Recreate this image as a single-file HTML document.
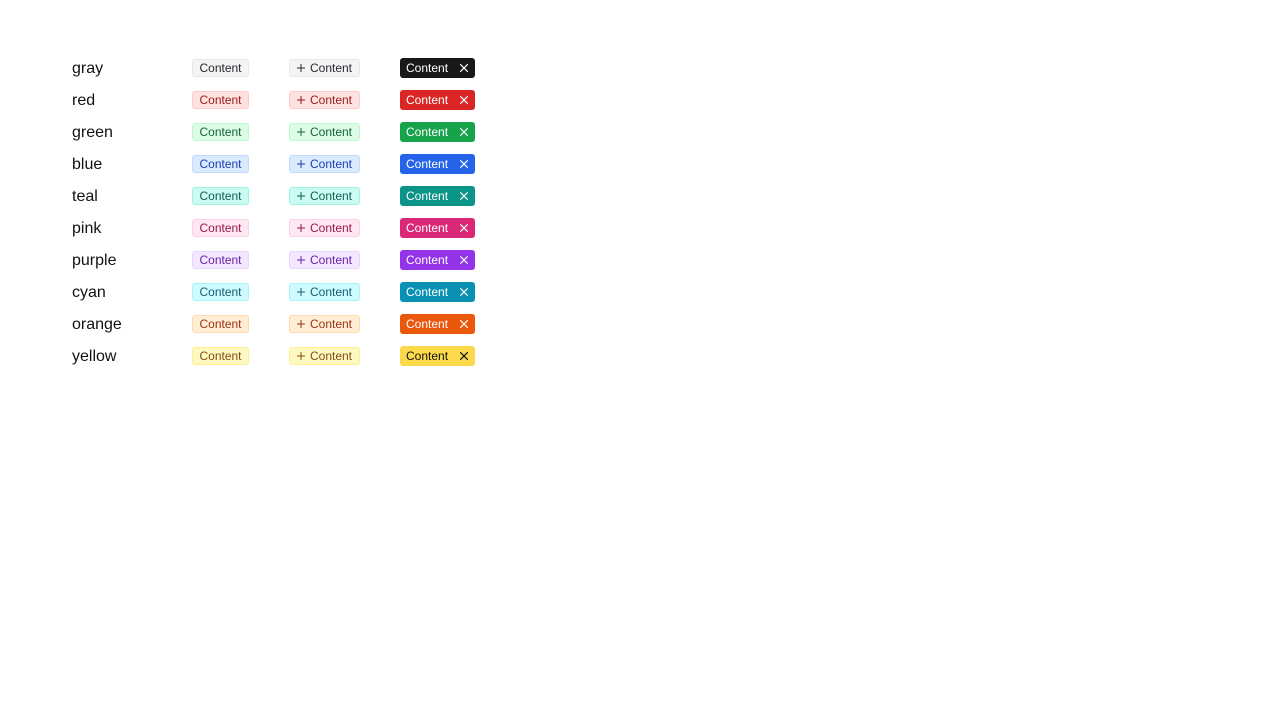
<!DOCTYPE html>
<html><head><style>
body{margin:0;width:1280px;height:720px;background:#fff;font-family:"Liberation Sans",sans-serif;position:relative}
.row{position:absolute;left:0;height:32px;width:600px}
.lab{position:absolute;left:72px;top:1px;line-height:32px;font-size:16px;color:#111}
.t{position:absolute;box-sizing:border-box;font-size:12px;border:1px solid;border-radius:3px;display:flex;align-items:center;justify-content:center}
.a{left:192px;top:7px;width:57px;height:18px}
.b{left:289px;top:7px;width:71px;height:18px}
.c{left:400px;top:6px;width:75px;height:20px;border:none;border-radius:3px;justify-content:flex-start;padding-left:6px}
.c svg{position:absolute;left:60px;top:6px}
.b svg{margin-right:5px}
</style></head><body>
<div id="r"></div>
<script>
const d=[["gray","#f3f4f6","#e5e7eb","#27272a","#18181b","#fff"],
["red","#fee2e2","#fecaca","#991b1b","#dc2626","#fff"],
["green","#dcfce7","#bbf7d0","#166534","#16a34a","#fff"],
["blue","#dbeafe","#bfdbfe","#1e40af","#2563eb","#fff"],
["teal","#ccfbf1","#99f6e4","#115e59","#0d9488","#fff"],
["pink","#fce7f3","#fbcfe8","#9d174d","#db2777","#fff"],
["purple","#f3e8ff","#e9d5ff","#6b21a8","#9333ea","#fff"],
["cyan","#cffafe","#a5f3fc","#155e75","#0891b2","#fff"],
["orange","#ffedd5","#fed7aa","#9a3412","#ea580c","#fff"],
["yellow","#fef9c3","#fef08a","#854d0e","#fcd94a","#111"]];
let h="";
d.forEach((c,i)=>{
h+=`<div class="row" style="top:${52+i*32}px"><div class="lab">${c[0]}</div>
<div class="t a" style="background:${c[1]};border-color:${c[2]};color:${c[3]}">Content</div>
<div class="t b" style="background:${c[1]};border-color:${c[2]};color:${c[3]}"><svg width="8" height="8" viewBox="0 0 8 8"><path d="M4 0V8M0 4H8" stroke="${c[3]}" stroke-width="1"/></svg>Content</div>
<div class="t c" style="background:${c[4]};color:${c[5]}">Content<svg width="8" height="8" viewBox="0 0 8 8"><path d="M0 0L8 8M8 0L0 8" stroke="${c[5]}" stroke-width="1.2"/></svg></div></div>`;
});
document.getElementById("r").innerHTML=h;
</script>
</body></html>
